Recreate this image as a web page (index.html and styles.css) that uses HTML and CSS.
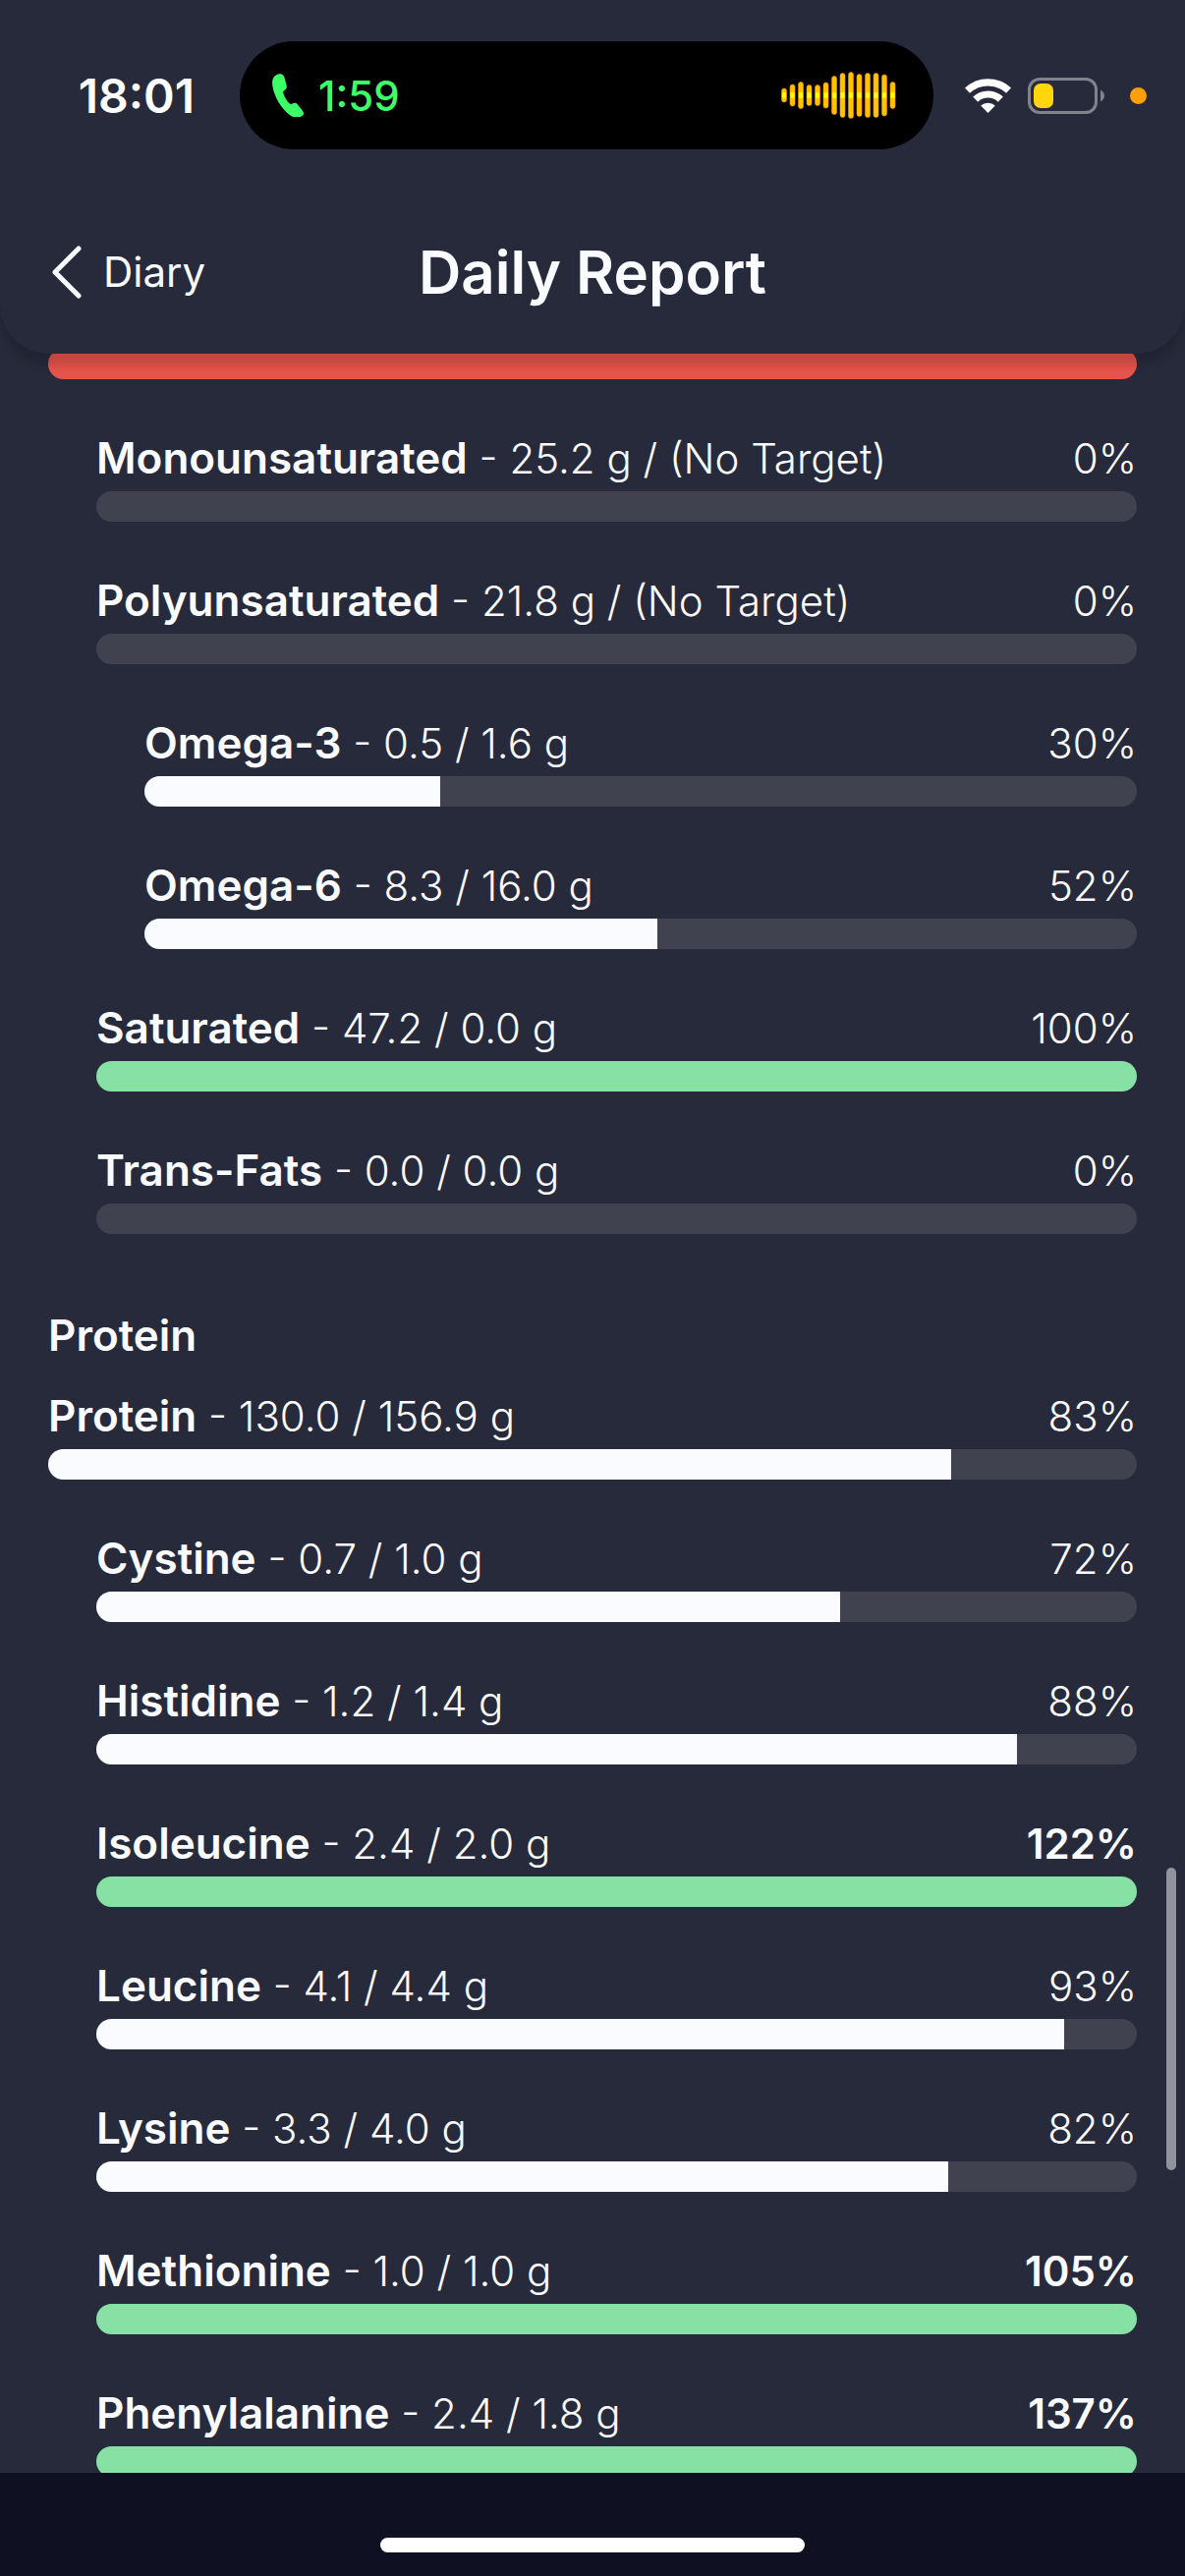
FILE: index.html
```html
<!DOCTYPE html>
<html lang="en">
<head>
<meta charset="utf-8">
<meta name="viewport" content="width=device-width, initial-scale=1">
<title>Daily Report</title>
<link rel="stylesheet" href="styles.css">
</head>
<body>
<header class="header">
  <div class="status">
    <time class="clock">18:01</time>
    <div class="island">
      <span class="call">
        <svg class="phone" viewBox="0 0 32 44" width="32" height="44" aria-hidden="true"><path fill="#3cff68" d="M6 .6C9.500-.6 11.600 1 12.500 4l2.200 8.200c.5 2-.3 3.300-2 4.500-1.800 1.200-1.800 2-1 4.200 1.300 3.400 2.800 6 5 8.600 1.300 1.500 2.200 1.700 4 1 2-.9 3.600-1 5 .8l5 6.300c1.800 2.300 1.700 4-.5 5.500-5 3.300-10.700 1-15.400-3.700C6.500 31.500.2 18.600.1 9.200.1 4.700 2.500 1.700 6 .6z"/></svg>
        <span>1:59</span>
      </span>
      <svg class="wave" viewBox="0 0 117 48" width="117" height="48" aria-hidden="true">
        <defs>
          <linearGradient id="glow" gradientUnits="userSpaceOnUse" x1="0" y1="0" x2="0" y2="48">
            <stop offset=".44" stop-color="#ffc400"/><stop offset=".45" stop-color="#ff0"/>
            <stop offset=".55" stop-color="#ff0"/><stop offset=".56" stop-color="#ffc400"/>
          </linearGradient>
        </defs>
        <g fill="url(#glow)" stroke="#ff8a00" stroke-width=".6">
          <rect x=".5" y="17" width="5" height="14" rx="2.500"/><rect x="9" y="13" width="5" height="22" rx="2.500"/>
          <rect x="17.500" y="10.500" width="5" height="27" rx="2.500"/><rect x="26" y="13.500" width="5" height="21" rx="2.500"/>
          <rect x="34.500" y="13.500" width="5" height="21" rx="2.500"/><rect x="43" y="11" width="5" height="26" rx="2.500"/>
          <rect x="51.500" y="4.500" width="5" height="39" rx="2.500"/><rect x="60" y="1.500" width="5" height="45" rx="2.500"/>
          <rect x="68.500" y=".5" width="5" height="47" rx="2.500"/><rect x="77" y="2.500" width="5" height="43" rx="2.500"/>
          <rect x="85.500" y="1.500" width="5" height="45" rx="2.500"/><rect x="94" y="1.500" width="5" height="45" rx="2.500"/>
          <rect x="102.500" y="3" width="5" height="42" rx="2.500"/><rect x="111" y="10.500" width="5" height="27" rx="2.500"/>
        </g>
      </svg>
    </div>
    <div class="indicators">
      <svg viewBox="0 0 47 35" width="47" height="35" aria-hidden="true">
        <g fill="none" stroke="#fff" stroke-width="7.200">
          <path d="M2.500 12.200a30.400 30.400 0 0 1 42 0"/><path d="M10.700 21.200a18.400 18.400 0 0 1 25.600 0"/>
        </g>
        <path fill="#fff" d="M23.500 35l-7.300-7.400a10.500 10.500 0 0 1 14.600 0z"/>
      </svg>
      <svg viewBox="0 0 78 37" width="78" height="37" aria-hidden="true">
        <rect x="1.500" y="1.500" width="68" height="34" rx="10.500" fill="none" stroke="#80828c" stroke-width="3"/>
        <rect x="6" y="6" width="20" height="25" rx="7" fill="#ffd60a"/>
        <path fill="#80828c" d="M74 12.500c5.300 3 5.300 9 0 12z"/>
      </svg>
      <span class="mic-dot"></span>
    </div>
  </div>
  <nav class="nav">
    <a class="back" href="#diary">
      <svg viewBox="0 0 32 54" width="32" height="54" aria-hidden="true"><path fill="none" stroke="#fafbff" stroke-width="5" stroke-linecap="round" stroke-linejoin="round" d="M28 3L4 27l24 24"/></svg>
      <span>Diary</span>
    </a>
    <h1 class="title">Daily Report</h1>
  </nav>
</header>

<main class="report">
  <section class="group">
    <progress class="bar over" max="100" value="100" aria-label="Fat"></progress>
    <div class="row sub"><p class="label"><b>Monounsaturated</b> - 25.2 g / (No Target)</p><span class="pct">0%</span><progress class="bar" max="100" value="0" aria-label="Monounsaturated"></progress></div>
    <div class="row sub"><p class="label"><b>Polyunsaturated</b> - 21.8 g / (No Target)</p><span class="pct">0%</span><progress class="bar" max="100" value="0" aria-label="Polyunsaturated"></progress></div>
    <div class="row subsub"><p class="label"><b>Omega-3</b> - 0.5 / 1.6 g</p><span class="pct">30%</span><progress class="bar" max="100" value="29.8" aria-label="Omega-3"></progress></div>
    <div class="row subsub"><p class="label"><b>Omega-6</b> - 8.3 / 16.0 g</p><span class="pct">52%</span><progress class="bar" max="100" value="51.7" aria-label="Omega-6"></progress></div>
    <div class="row sub"><p class="label"><b>Saturated</b> - 47.2 / 0.0 g</p><span class="pct">100%</span><progress class="bar met" max="100" value="100" aria-label="Saturated"></progress></div>
    <div class="row sub"><p class="label"><b>Trans-Fats</b> - 0.0 / 0.0 g</p><span class="pct">0%</span><progress class="bar" max="100" value="0" aria-label="Trans-Fats"></progress></div>
  </section>
  <h2 class="group-title">Protein</h2>
  <section class="group">
    <div class="row"><p class="label"><b>Protein</b> - 130.0 / 156.9 g</p><span class="pct">83%</span><progress class="bar" max="100" value="82.9" aria-label="Protein"></progress></div>
    <div class="row sub"><p class="label"><b>Cystine</b> - 0.7 / 1.0 g</p><span class="pct">72%</span><progress class="bar" max="100" value="71.5" aria-label="Cystine"></progress></div>
    <div class="row sub"><p class="label"><b>Histidine</b> - 1.2 / 1.4 g</p><span class="pct">88%</span><progress class="bar" max="100" value="88.5" aria-label="Histidine"></progress></div>
    <div class="row sub"><p class="label"><b>Isoleucine</b> - 2.4 / 2.0 g</p><span class="pct strong">122%</span><progress class="bar met" max="100" value="100" aria-label="Isoleucine"></progress></div>
    <div class="row sub"><p class="label"><b>Leucine</b> - 4.1 / 4.4 g</p><span class="pct">93%</span><progress class="bar" max="100" value="93" aria-label="Leucine"></progress></div>
    <div class="row sub"><p class="label"><b>Lysine</b> - 3.3 / 4.0 g</p><span class="pct">82%</span><progress class="bar" max="100" value="81.9" aria-label="Lysine"></progress></div>
    <div class="row sub"><p class="label"><b>Methionine</b> - 1.0 / 1.0 g</p><span class="pct strong">105%</span><progress class="bar met" max="100" value="100" aria-label="Methionine"></progress></div>
    <div class="row sub"><p class="label"><b>Phenylalanine</b> - 2.4 / 1.8 g</p><span class="pct strong">137%</span><progress class="bar met" max="100" value="100" aria-label="Phenylalanine"></progress></div>
  </section>
  <span class="scroll-thumb"></span>
</main>

<footer class="home"><span class="home-bar"></span></footer>
</body>
</html>
```
FILE: styles.css
```css
* { box-sizing: border-box; }

body {
  margin: 0;
  height: 100vh;
  display: flex;
  flex-direction: column;
  overflow: hidden;
  background: #272a3b;
  color: #fafbff;
  font-family: Inter, "Liberation Sans", sans-serif;
}

.header {
  position: relative;
  z-index: 1;
  flex: none;
  padding-top: 42px;
  background: #272a3b;
  border-radius: 0 0 50px 50px;
  box-shadow: 0 12px 8px rgba(0, 0, 0, 0.15);
}

.status {
  display: grid;
  grid-template-columns: 244px 1fr 256px;
  align-items: center;
}

.clock {
  padding-right: 46px;
  text-align: right;
  color: #fff;
  font-size: 48px;
  font-weight: 600;
}

.island {
  display: flex;
  align-items: center;
  justify-content: space-between;
  height: 110px;
  padding: 0 38px 0 33px;
  border-radius: 55px;
  background: #000;
}

.call {
  display: flex;
  align-items: center;
  gap: 15px;
  color: #3cff68;
  font-size: 42px;
  font-weight: 500;
}

.indicators {
  display: flex;
  align-items: center;
  padding-left: 32px;
  gap: 17px;
}

.mic-dot {
  width: 17px;
  height: 17px;
  margin-left: 9px;
  border-radius: 50%;
  background: #ff9f0a;
}

.nav {
  display: grid;
  grid-template-columns: 1fr auto 1fr;
  align-items: center;
  padding: 85px 52px 43px;
}

.back {
  display: flex;
  align-items: center;
  gap: 21px;
  color: inherit;
  font-size: 42px;
  line-height: 58px;
  text-decoration: none;
}

.title {
  margin: 0;
  font-size: 60px;
  font-weight: 600;
  line-height: 80px;
}

.report {
  position: relative;
  flex: 1;
  min-height: 0;
  margin-top: -50px;
  padding: 45px 49px 0;
  overflow: hidden;
}

.group {
  display: flex;
  flex-direction: column;
  gap: 52px;
}

.group-title {
  margin: 74px 0 25px;
  font-size: 44px;
  font-weight: 600;
  line-height: 58px;
}

.row {
  display: grid;
  grid-template-columns: 1fr auto;
  row-gap: 4px;
}

.sub { margin-left: 49px; }
.subsub { margin-left: 98px; }

.label,
.pct {
  margin: 0;
  font-size: 42px;
  font-weight: 300;
  line-height: 58px;
  white-space: nowrap;
}

.label b {
  font-size: 44px;
  font-weight: 600;
  line-height: 1;
}

.strong { font-weight: 600; }

.bar {
  grid-column: 1 / -1;
  display: block;
  width: 100%;
  height: 31px;
  overflow: hidden;
  appearance: none;
  -webkit-appearance: none;
  border: 0;
  border-radius: 16px;
  background: #414250;
}

.bar::-webkit-progress-bar { background: #414250; }
.bar::-webkit-progress-value { background: #fafbff; }
.met::-webkit-progress-value { background: #87e0a4; }
.over::-webkit-progress-value { background: #e5544b; }

.scroll-thumb {
  position: absolute;
  right: 9px;
  bottom: 308px;
  width: 10px;
  height: 308px;
  border-radius: 5px;
  background: #91939d;
}

.home {
  flex: none;
  display: flex;
  justify-content: center;
  align-items: flex-end;
  height: 105px;
  padding-bottom: 24px;
  background: #0f1021;
}

.home-bar {
  width: 432px;
  height: 15px;
  border-radius: 8px;
  background: #fff;
}
```
